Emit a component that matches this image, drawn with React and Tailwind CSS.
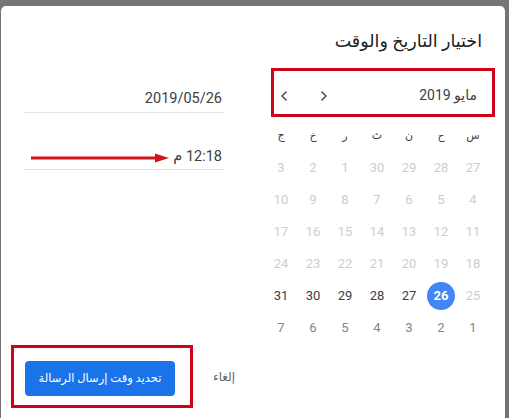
import React from 'react';
import { ChevronLeft, ChevronRight } from 'lucide-react';

const WEEKDAYS = ['س', 'ح', 'ن', 'ث', 'ر', 'خ', 'ج'];

// each cell: [label, kind] — kind: off (disabled), on (selectable), next (next month), sel (selected)
const WEEKS = [
  [['27', 'off'], ['28', 'off'], ['29', 'off'], ['30', 'off'], ['1', 'off'], ['2', 'off'], ['3', 'off']],
  [['4', 'off'], ['5', 'off'], ['6', 'off'], ['7', 'off'], ['8', 'off'], ['9', 'off'], ['10', 'off']],
  [['11', 'off'], ['12', 'off'], ['13', 'off'], ['14', 'off'], ['15', 'off'], ['16', 'off'], ['17', 'off']],
  [['18', 'off'], ['19', 'off'], ['20', 'off'], ['21', 'off'], ['22', 'off'], ['23', 'off'], ['24', 'off']],
  [['25', 'off'], ['26', 'sel'], ['27', 'on'], ['28', 'on'], ['29', 'on'], ['30', 'on'], ['31', 'on']],
  [['1', 'next'], ['2', 'next'], ['3', 'next'], ['4', 'next'], ['5', 'next'], ['6', 'next'], ['7', 'next']],
];

const DayCell = ({ label, kind }) => {
  if (kind === 'sel') {
    return (
      <div className="h-8 flex items-center justify-center">
        <div className="w-[28px] h-[28px] rounded-full bg-[#4285f4] text-white font-bold text-[13px] flex items-center justify-center">
          {label}
        </div>
      </div>
    );
  }
  const color = kind === 'off' ? 'text-[#cdcdcd]' : kind === 'next' ? 'text-[#80868b]' : 'text-[#3c4043]';
  return <div className={`h-8 flex items-center justify-center text-[13px] ${color}`}>{label}</div>;
};

const App = () => {
  return (
    <div className="w-[509px] h-[418px] overflow-hidden bg-[#757575] pt-[6px] pl-[1px] pr-[4px] flex font-['Roboto','DejaVu_Sans',sans-serif]">
      <div className="flex-1 bg-white rounded-t-[5px] flex pl-[10px]">
        {/* left: fields + actions */}
        <div className="w-[240px] flex flex-col">
          <div className="ml-[13px] w-[200px] mt-[83px] border-b border-[#e3e3e3] pb-[3px] pr-[2px] text-right text-[14.5px] leading-[20px] text-[#3c4043]" dir="rtl">
            2019/05/26
          </div>
          <div className="relative ml-[13px] w-[200px] mt-[34px] border-b border-[#e3e3e3] pb-[2px] pr-[2px] text-right text-[14.5px] leading-[20px] text-[#3c4043]" dir="rtl">
            12:18 م
            <svg className="absolute left-[7px] top-[5px]" width="138" height="12" viewBox="0 0 138 12">
              <line x1="0" y1="6" x2="126" y2="6" stroke="#d0141a" strokeWidth="3" strokeLinecap="round" />
              <polygon points="124,1.5 138,6 124,10.5" fill="#d0141a" />
            </svg>
          </div>
          <div className="mt-[175px] flex items-center">
            <div className="w-[182px] h-[63px] border-[3px] border-[#d0021b] pl-[11px] pt-[13px]">
              <button className="w-[150px] h-[35px] rounded-[4px] bg-[#1a73e8] text-white text-[11.5px] whitespace-nowrap" dir="rtl">
                تحديد وقت إرسال الرسالة
              </button>
            </div>
            <span className="ml-[20px] text-[12px] text-[#5f6368]" dir="rtl">إلغاء</span>
          </div>
        </div>

        {/* right: title + calendar */}
        <div className="ml-[14px] w-[230px] flex flex-col">
          <div className="pt-[23px] pr-[13px] text-right text-[17.5px] leading-[24px] text-[#202124]" dir="rtl">
            اختيار التاريخ والوقت
          </div>
          <div className="ml-[6px] mt-[15px] h-[49px] border-[3px] border-[#d0021b] flex items-center justify-between pl-[2px] pr-[15px]" dir="ltr">
            <div className="flex items-center gap-[24px] text-[#3c4043] pt-[6px]">
              <ChevronLeft size={16} strokeWidth={2} />
              <ChevronRight size={16} strokeWidth={2} />
            </div>
            <span className="text-[14px] text-[#3c4043] pt-[6px]" dir="rtl">مايو 2019</span>
          </div>
          <div className="w-[224px] mt-[3px] grid grid-cols-7" dir="rtl">
            {WEEKDAYS.map((d) => (
              <div key={d} className="h-8 flex items-center justify-center text-[11px] text-[#3c4043]">{d}</div>
            ))}
            {WEEKS.flat().map(([label, kind], i) => (
              <DayCell key={i} label={label} kind={kind} />
            ))}
          </div>
        </div>
      </div>
    </div>
  );
};

export default App;
